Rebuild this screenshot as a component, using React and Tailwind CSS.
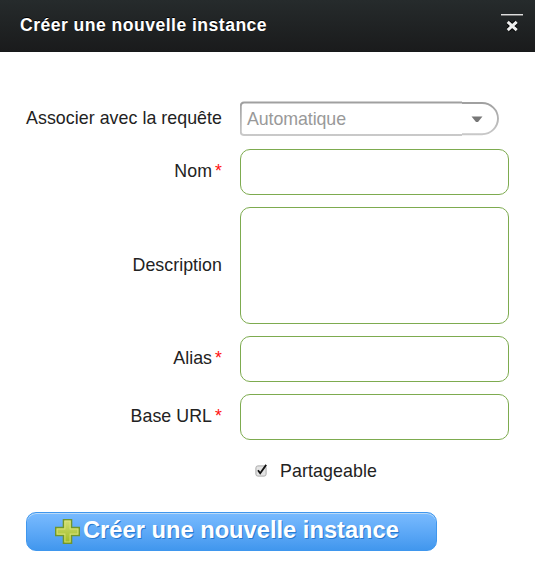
function Label({ children, required, className }) {
  return (
    <div className={`flex w-[222px] shrink-0 items-center justify-end whitespace-nowrap text-[17.8px] leading-[22px] tracking-[0.05px] ${className || ''}`}>
      <span>{children}</span>
      {required && <span className="ml-[3px] text-[#ff1010]">*</span>}
    </div>
  );
}

function Field({ label, required, multiline, className }) {
  const box = 'block w-[269px] resize-none rounded-[10px] border border-[#7dab4f] bg-white px-2 outline-none';
  return (
    <div className={`flex items-center gap-[18px] ${className || ''}`}>
      <Label required={required} className={multiline ? 'pb-px' : 'pb-[3px]'}>{label}</Label>
      {multiline ? <textarea className={`${box} h-[117px]`} /> : <input type="text" className={`${box} h-[46px]`} />}
    </div>
  );
}

function PlusIcon() {
  return (
    <svg width="25" height="25" viewBox="0 0 24 24" className="-mt-px shrink-0">
      <defs>
        <linearGradient id="plus" x1="0" y1="0" x2="0" y2="1">
          <stop offset="0" stopColor="#d3df76" />
          <stop offset="1" stopColor="#9dbb22" />
        </linearGradient>
      </defs>
      <path d="M8.1 .7h7.8v7.4h7.4v7.8h-7.4v7.4h-7.8v-7.4H.7v-7.8h7.4z" fill="url(#plus)" stroke="#6f962c" strokeWidth="1.4" />
      <path d="M9.5 2h5v7.5H22v5h-7.5V22h-5v-7.5H2v-5h7.5z" fill="none" stroke="#e2ea86" strokeOpacity=".7" strokeWidth="1" />
    </svg>
  );
}

export default function App() {
  return (
    <div className="flex h-[574px] w-[535px] flex-col overflow-hidden bg-white font-['Liberation_Sans',Arial,sans-serif] text-[#222]">
      <header className="flex h-[52px] shrink-0 items-start justify-between border-b border-[#17191a] bg-linear-to-b from-[#262b2c] to-[#1a1b1c] pl-[20px] pr-[12px]">
        <h1 className="mt-[14px] text-[17.6px] leading-[22px] font-bold tracking-[0.46px] whitespace-nowrap text-white [text-shadow:0_-1px_0_#000]">
          Créer une nouvelle instance
        </h1>
        <button className="mt-[14px] flex w-[22px] flex-col items-center border-t border-[#ddd] shadow-[inset_0_1px_0_#777]">
          <svg width="13" height="12" viewBox="0 0 13 12" className="mt-[5px]">
            <path d="M2 2l8.4 8M10.4 2L2 10" stroke="#000" strokeWidth="4.8" />
            <path d="M1.7 1.8l9 8.4M10.7 1.8l-9 8.4" stroke="#eee" strokeWidth="3" />
          </svg>
        </button>
      </header>

      <main className="flex flex-col pt-[49px]">
        <div className="flex items-center gap-[18px]">
          <Label className="pb-[1px]">Associer avec la requête</Label>
          <div className="relative flex h-[35px] w-[259px] items-center pl-[7px] pr-[16px]">
            <svg width="259" height="35" viewBox="0 0 259 35" className="absolute inset-0">
              <defs>
                <linearGradient id="edge" x1="0" y1="0" x2="0" y2="1">
                  <stop offset="0" stopColor="#a0a0a0" />
                  <stop offset="1" stopColor="#c9c9c9" />
                </linearGradient>
              </defs>
              <path d="M222 1.5H4Q.8 1.5 .8 5V31Q.8 34 4 34H222M222 2H242A16 15.6 0 0 1 242 33.2H222" fill="none" stroke="url(#edge)" strokeWidth="1.9" />
            </svg>
            <span className="flex-1 text-[17.8px] leading-[22px] tracking-[-0.08px] text-[#999]">Automatique</span>
            <svg width="12" height="7" viewBox="0 0 12 7" className="mt-px">
              <path d="M.5 .5h11L7 6H5z" fill="#777" />
            </svg>
          </div>
        </div>
        <Field label="Nom" required className="mt-[13px]" />
        <Field label="Description" multiline className="mt-[12px]" />
        <Field label="Alias" required className="mt-[12px]" />
        <Field label="Base URL" required className="mt-[12px]" />

        <label className="mt-[20px] flex h-[22px] items-center pl-[255px] text-[17.8px] leading-[22px] tracking-[0.1px]">
          <svg width="13" height="13" viewBox="0 0 13 13" className="-mt-[2px]">
            <rect x=".9" y="1.9" width="10.2" height="10.2" rx="2" fill="#e4e4e4" stroke="#aaa" />
            <path d="M3 6.2l2.2 3L11.2.9" fill="none" stroke="#111" strokeWidth="1.8" />
          </svg>
          <span className="ml-[12px]">Partageable</span>
        </label>

        <button className="mt-[30px] ml-[26px] flex h-[39px] w-[411px] items-center rounded-[10px] border border-[#3f97ee] bg-linear-to-b from-[#79bbff] to-[#4197ee] pl-[28px] text-left shadow-[inset_0_1px_0_#bbdaf7]">
          <PlusIcon />
          <span className="ml-[3px] pb-[3px] text-[23.7px] leading-[28px] font-bold whitespace-nowrap text-white [text-shadow:1px_1px_0_#287ace]">
            Créer une nouvelle instance
          </span>
        </button>
      </main>
    </div>
  );
}
